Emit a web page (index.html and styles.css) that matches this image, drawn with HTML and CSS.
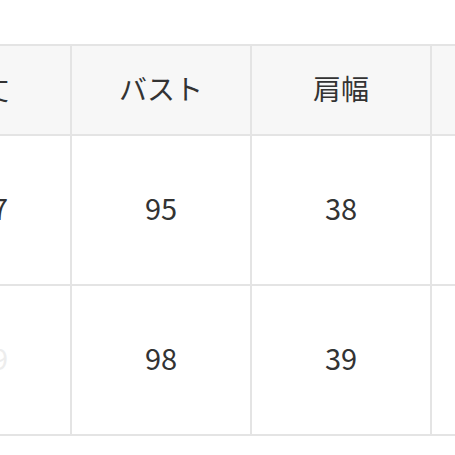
FILE: index.html
```html
<!DOCTYPE html>
<html lang="ja">
<head>
<meta charset="utf-8">
<link rel="stylesheet" href="styles.css">
</head>
<body>
<div class="size-table">
  <div class="cell head">着丈</div>
  <div class="cell head">バスト</div>
  <div class="cell head">肩幅</div>
  <div class="cell head">袖丈</div>
  <div class="cell first">67</div>
  <div class="cell">95</div>
  <div class="cell">38</div>
  <div class="cell">58</div>
  <div class="cell first faint">69</div>
  <div class="cell">98</div>
  <div class="cell">39</div>
  <div class="cell">59</div>
</div>
</body>
</html>
```
FILE: styles.css
```css
html, body {
  margin: 0;
  padding: 0;
  overflow: hidden;
  background: #ffffff;
}
body {
  width: 455px;
  height: 455px;
  font-family: "Noto Sans CJK JP", "Noto Sans", sans-serif;
  color: #333333;
}
.size-table {
  display: grid;
  grid-template-columns: repeat(4, 178px);
  grid-template-rows: 88px 148px 148px;
  gap: 2px;
  padding: 2px;
  background: #e4e4e4;
  width: max-content;
  margin-left: -110px;
  margin-top: 44px;
}
.cell {
  background: #ffffff;
  display: flex;
  align-items: center;
  justify-content: center;
  font-size: 29px;
  line-height: 1;
  padding-bottom: 6px;
  box-sizing: border-box;
}
.head {
  background: #f7f7f7;
  font-size: 28px;
  padding-bottom: 5px;
}
.first {
  padding-left: 22px;
}
.faint {
  color: #ededed;
}
```
